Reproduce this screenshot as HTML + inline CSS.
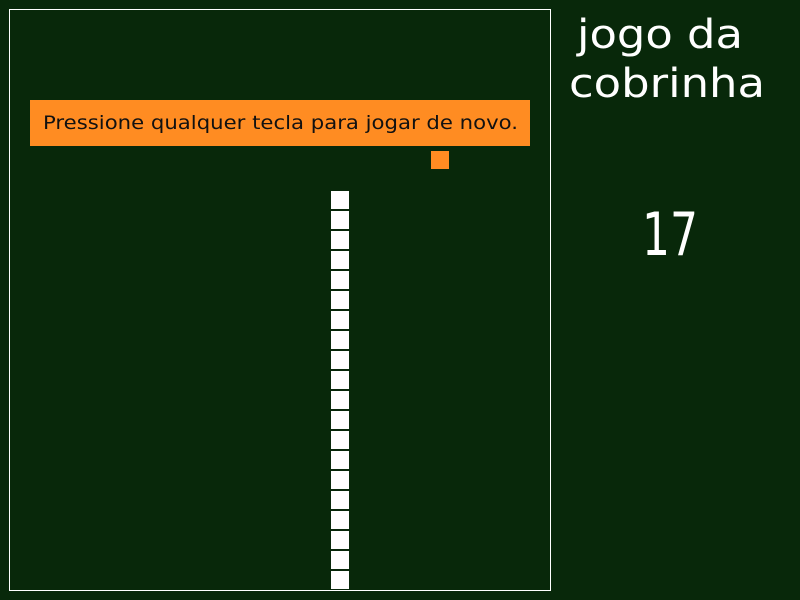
<!DOCTYPE html>
<html><head><meta charset="utf-8"><style>
html,body{margin:0;padding:0;background:#08280a;width:800px;height:600px;overflow:hidden}
svg{display:block}
</style></head><body>
<svg width="800" height="600" xmlns="http://www.w3.org/2000/svg">
<rect width="800" height="600" fill="#08280a"/>
<rect x="9.5" y="9.5" width="541" height="581" fill="none" stroke="#fff" stroke-width="1"/>
<rect x="30" y="100" width="500" height="46" fill="#ff8c22"/>
<text x="43" y="129" font-family="DejaVu Sans, sans-serif" font-size="19" fill="#111" textLength="475" lengthAdjust="spacingAndGlyphs">Pressione qualquer tecla para jogar de novo.</text>
<rect x="431" y="151" width="18" height="18" fill="#ff8c22"/>
<g fill="#fff">
<rect x="331" y="191" width="18" height="18"/><rect x="331" y="211" width="18" height="18"/><rect x="331" y="231" width="18" height="18"/><rect x="331" y="251" width="18" height="18"/><rect x="331" y="271" width="18" height="18"/><rect x="331" y="291" width="18" height="18"/><rect x="331" y="311" width="18" height="18"/><rect x="331" y="331" width="18" height="18"/><rect x="331" y="351" width="18" height="18"/><rect x="331" y="371" width="18" height="18"/><rect x="331" y="391" width="18" height="18"/><rect x="331" y="411" width="18" height="18"/><rect x="331" y="431" width="18" height="18"/><rect x="331" y="451" width="18" height="18"/><rect x="331" y="471" width="18" height="18"/><rect x="331" y="491" width="18" height="18"/><rect x="331" y="511" width="18" height="18"/><rect x="331" y="531" width="18" height="18"/><rect x="331" y="551" width="18" height="18"/><rect x="331" y="571" width="18" height="18"/>
</g>
<g font-family="DejaVu Sans, sans-serif" fill="#fff">
<text x="577" y="48" font-size="40" textLength="166" lengthAdjust="spacingAndGlyphs">jogo da</text>
<text x="569" y="97" font-size="40" textLength="196" lengthAdjust="spacingAndGlyphs">cobrinha</text>
<text x="642" y="255" font-size="60" textLength="56" lengthAdjust="spacingAndGlyphs">17</text>
</g>
</svg>
</body></html>
